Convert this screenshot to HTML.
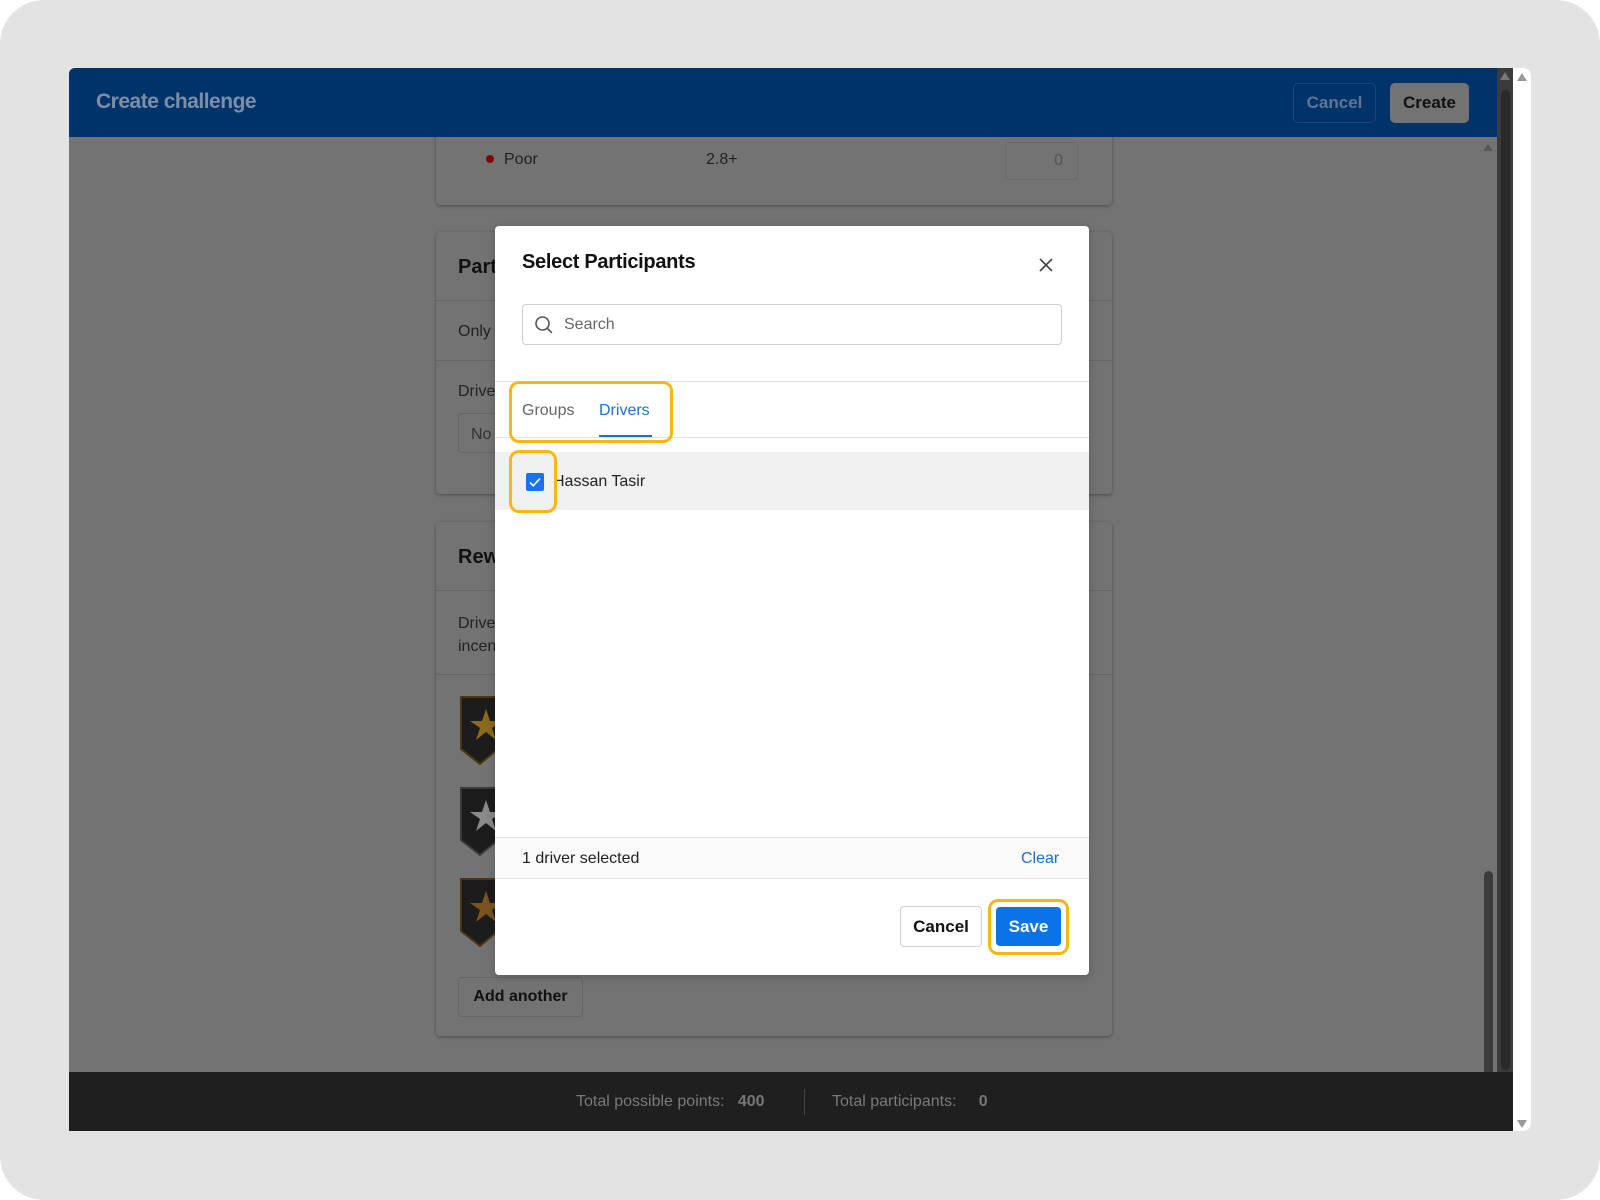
<!DOCTYPE html>
<html><head><meta charset="utf-8"><style>
*{box-sizing:border-box;margin:0;padding:0}
body{width:1600px;height:1200px;background:#fff;font-family:"Liberation Sans",sans-serif;position:relative;overflow:hidden}
.abs{position:absolute}
#bg{left:0;top:0;width:1600px;height:1200px;background:#e3e3e3;border-radius:44px}
#win{left:69px;top:68px;width:1428px;height:1063px;background:#737373;overflow:hidden;border-top-left-radius:6px}
#hdr{left:69px;top:68px;width:1428px;height:69px;background:#00336a;border-top-left-radius:6px;z-index:5}
.card{background:#737373;border-radius:4px;box-shadow:0 1px 3px rgba(0,0,0,.35)}
.gt{color:#222;font-size:16px}
</style></head><body>
<div id="bg" class="abs"></div>
<div id="win" class="abs"></div>
<div id="hdr" class="abs">
  <div class="abs" style="left:27px;top:22px;font-size:21px;font-weight:bold;color:#7d8ea6;letter-spacing:-.5px">Create challenge</div>
  <div class="abs" style="left:1224px;top:15px;width:83px;height:40px;border:1px solid #1f4479;border-radius:5px;color:#5f7794;font-weight:bold;font-size:17px;text-align:center;line-height:38px">Cancel</div>
  <div class="abs" style="left:1321px;top:15px;width:79px;height:40px;background:#737373;border-radius:5px;color:#111;font-weight:bold;font-size:17px;text-align:center;line-height:40px">Create</div>
</div>
<!-- scroll track -->
<div class="abs" style="left:1497px;top:68px;width:16px;height:1004px;background:#3b3b3b"></div>
<div class="abs" style="left:1501px;top:90px;width:9px;height:980px;background:#2a2a2a;border-radius:5px"></div>
<div class="abs" style="left:1500px;top:72px;width:0;height:0;border-left:5px solid transparent;border-right:5px solid transparent;border-bottom:8px solid #777"></div>
<div class="abs" style="left:1513px;top:68px;width:18px;height:1063px;background:#fff;border-radius:0 8px 8px 0"></div>
<div class="abs" style="left:1517px;top:73px;width:0;height:0;border-left:5px solid transparent;border-right:5px solid transparent;border-bottom:8px solid #999"></div>
<div class="abs" style="left:1517px;top:1120px;width:0;height:0;border-left:5px solid transparent;border-right:5px solid transparent;border-top:8px solid #999"></div>
<div class="abs" style="left:1483px;top:144px;width:0;height:0;border-left:5px solid transparent;border-right:5px solid transparent;border-bottom:7px solid #555"></div>
<div class="abs" style="left:1484px;top:871px;width:9px;height:205px;background:#3c3c3c;border-radius:5px"></div>

<!-- background cards -->
<div class="abs card" style="left:436px;top:110px;width:676px;height:95px">
  <div class="abs" style="left:50px;top:45px;width:8px;height:8px;border-radius:50%;background:#7a0a0a"></div>
  <div class="abs gt" style="left:68px;top:41px">Poor</div>
  <div class="abs gt" style="left:270px;top:41px">2.8+</div>
  <div class="abs" style="left:569px;top:32px;width:73px;height:38px;border:1px solid #6a6a6a;border-radius:4px;color:#555;text-align:right;padding-right:14px;line-height:36px">0</div>
</div>
<div class="abs card" style="left:436px;top:232px;width:676px;height:262px">
  <div class="abs" style="left:22px;top:24px;font-size:20px;font-weight:bold;color:#111">Participants</div>
  <div class="abs" style="left:0;top:68px;width:100%;height:1px;background:#666"></div>
  <div class="abs gt" style="left:22px;top:91px">Only</div>
  <div class="abs" style="left:0;top:128px;width:100%;height:1px;background:#666"></div>
  <div class="abs gt" style="left:22px;top:151px">Drivers</div>
  <div class="abs" style="left:22px;top:181px;width:200px;height:40px;border:1px solid #666;border-radius:4px;color:#333;padding:12px">No</div>
</div>
<div class="abs card" style="left:436px;top:522px;width:676px;height:514px">
  <div class="abs" style="left:22px;top:24px;font-size:20px;font-weight:bold;color:#111">Rewards</div>
  <div class="abs" style="left:0;top:68px;width:100%;height:1px;background:#666"></div>
  <div class="abs gt" style="left:22px;top:90px;line-height:23px">Drivers<br>incentive</div>
  <div class="abs" style="left:0;top:152px;width:100%;height:1px;background:#666"></div>
  <svg class="abs" style="left:22px;top:172px" width="40" height="270" viewBox="0 0 40 270">
    <g><path d="M3 3h37v52l-18 15L3 55z" fill="#1c1c1c" stroke="#4a3a12" stroke-width="2"/><path d="M28 15l4 12h12l-10 7 4 12-10-8-10 8 4-12-10-7h12z" fill="#8a6b1c"/></g>
    <g transform="translate(0,91)"><path d="M3 3h37v52l-18 15L3 55z" fill="#1c1c1c" stroke="#3a3a3a" stroke-width="2"/><path d="M28 15l4 12h12l-10 7 4 12-10-8-10 8 4-12-10-7h12z" fill="#8a8a8a"/></g>
    <g transform="translate(0,182)"><path d="M3 3h37v52l-18 15L3 55z" fill="#1c1c1c" stroke="#4a3614" stroke-width="2"/><path d="M28 15l4 12h12l-10 7 4 12-10-8-10 8 4-12-10-7h12z" fill="#7a5420"/></g>
  </svg>
  <div class="abs" style="left:22px;top:455px;width:125px;height:40px;border:1px solid #666;border-radius:4px;font-weight:bold;font-size:16px;color:#111;text-align:center;line-height:38px">Add another</div>
</div>

<!-- bottom bar -->
<div class="abs" style="left:69px;top:1072px;width:1444px;height:59px;background:#1f1f1f;color:#7a7a7a;font-size:16px">
  <div class="abs" style="left:507px;top:21px">Total possible points:&nbsp;&nbsp; <b style="color:#777">400</b></div>
  <div class="abs" style="left:735px;top:17px;width:1px;height:26px;background:#444"></div>
  <div class="abs" style="left:763px;top:21px">Total participants: &nbsp;&nbsp;&nbsp;&nbsp;<b style="color:#777">0</b></div>
</div>

<!-- modal -->
<div class="abs" style="left:495px;top:226px;width:594px;height:749px;background:#fff;border-radius:4px;box-shadow:0 2px 10px rgba(0,0,0,.2);z-index:6">
  <div class="abs" style="left:27px;top:25px;font-size:20px;font-weight:bold;color:#111;letter-spacing:-.3px">Select Participants</div>
  <svg class="abs" style="left:543px;top:31px" width="16" height="16" viewBox="0 0 16 16"><path d="M2 2l12 12M14 2L2 14" stroke="#444" stroke-width="1.6"/></svg>
  <div class="abs" style="left:27px;top:78px;width:540px;height:41px;border:1px solid #cfcfcf;border-radius:4px">
    <svg class="abs" style="left:11px;top:10px" width="20" height="20" viewBox="0 0 20 20"><circle cx="8.5" cy="8.5" r="6.5" fill="none" stroke="#555" stroke-width="1.6"/><path d="M13.3 13.3l4.5 4.5" stroke="#555" stroke-width="1.6"/></svg>
    <div class="abs" style="left:41px;top:11px;font-size:16px;color:#666">Search</div>
  </div>
  <div class="abs" style="left:0;top:155px;width:100%;height:1px;background:#e3e3e3"></div>
  <div class="abs" style="left:27px;top:176px;font-size:16px;color:#666">Groups</div>
  <div class="abs" style="left:104px;top:176px;font-size:16px;color:#1a6fdc">Drivers</div>
  <div class="abs" style="left:104px;top:209px;width:53px;height:2px;background:#1a6fdc"></div>
  <div class="abs" style="left:0;top:211px;width:100%;height:1px;background:#e3e3e3"></div>
  <div class="abs" style="left:0;top:226px;width:100%;height:58px;background:#f0f0f0"></div>
  <div class="abs" style="left:31px;top:247px;width:18px;height:18px;background:#1a73e8;border-radius:2px">
    <svg width="18" height="18" viewBox="0 0 18 18"><path d="M4 9.5l3.3 3.2L14 5.5" fill="none" stroke="#fff" stroke-width="1.6"/></svg>
  </div>
  <div class="abs" style="left:58px;top:247px;font-size:16px;color:#222">Hassan Tasir</div>
  <div class="abs" style="left:0;top:611px;width:100%;height:42px;background:#fafafa;border-top:1px solid #e3e3e3;border-bottom:1px solid #e3e3e3"></div>
  <div class="abs" style="left:27px;top:624px;font-size:16px;color:#222">1 driver selected</div>
  <div class="abs" style="left:526px;top:624px;font-size:16px;color:#1a6fdc">Clear</div>
  <div class="abs" style="left:405px;top:680px;width:82px;height:41px;border:1px solid #d0d0d0;border-radius:4px;font-weight:bold;font-size:17px;color:#111;text-align:center;line-height:39px">Cancel</div>
  <div class="abs" style="left:501px;top:681px;width:65px;height:39px;background:#0a73e8;border-radius:4px;font-weight:bold;font-size:17px;color:#fff;text-align:center;line-height:39px">Save</div>
</div>
<!-- highlight boxes -->
<div class="abs" style="left:509px;top:381px;width:164px;height:62px;border:3px solid #fbb614;border-radius:10px;z-index:7"></div>
<div class="abs" style="left:509px;top:450px;width:48px;height:63px;border:3px solid #fbb614;border-radius:10px;z-index:7"></div>
<div class="abs" style="left:988px;top:899px;width:81px;height:56px;border:3px solid #fbb614;border-radius:10px;z-index:7"></div>
</body></html>
